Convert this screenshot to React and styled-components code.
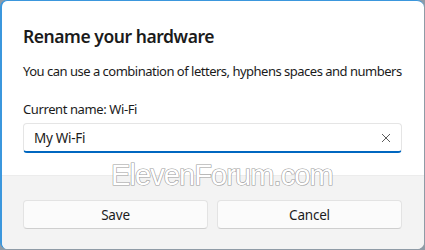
import styled, { createGlobalStyle } from "styled-components";

const GlobalStyle = createGlobalStyle`
  html, body {
    margin: 0;
    padding: 0;
    background: #8f9ba6;
  }
  body {
    font-family: "Segoe UI", "Noto Sans", "Liberation Sans", sans-serif;
    color: #1b1b1b;
  }
`;

const Dialog = styled.div`
  position: relative;
  width: 424px;
  height: 249px;
  box-sizing: border-box;
  background: #ffffff;
  border-top: 1px solid #3b97dd;
  border-left: 2px solid #3b97dd;
  border-radius: 7px;
  overflow: hidden;
  display: flex;
  flex-direction: column;
`;

const Body = styled.div`
  padding: 22px 22px 0 21px;
  height: 174px;
  box-sizing: border-box;
`;

const Title = styled.h1`
  margin: 0;
  font-size: 17.5px;
  font-weight: 600;
  line-height: 26px;
  letter-spacing: -0.45px;
`;

const Hint = styled.p`
  margin: 12px 0 0;
  font-size: 13px;
  line-height: 20px;
  letter-spacing: -0.5px;
  white-space: nowrap;
`;

const Label = styled.div`
  margin-top: 18px;
  font-size: 13px;
  line-height: 20px;
  letter-spacing: -0.4px;
`;

const Field = styled.div`
  margin-top: 4px;
  height: 30px;
  box-sizing: border-box;
  display: flex;
  align-items: center;
  justify-content: space-between;
  padding: 0 10px 0 10px;
  border: 1px solid #e5e5e5;
  border-bottom: 2px solid #0067c0;
  border-radius: 4px;
  background: #ffffff;
  font-size: 13.5px;
  letter-spacing: -0.3px;
`;

const ClearIcon = styled.svg`
  width: 10px;
  height: 10px;
`;

const Footer = styled.div`
  flex: 1;
  background: #f3f3f3;
  border-top: 1px solid #ececec;
  display: grid;
  grid-template-columns: 1fr 1fr;
  gap: 9px;
  padding: 24px 22px 0 21px;
  align-content: start;
`;

const Button = styled.button`
  height: 29px;
  border: 1px solid #e3e3e3;
  border-bottom-color: #cfcfcf;
  border-radius: 4px;
  background: #fbfbfb;
  font-family: inherit;
  font-size: 13.5px;
  letter-spacing: -0.2px;
  color: #1b1b1b;
`;

const Watermark = styled.div`
  position: absolute;
  left: 109px;
  top: 157px;
  font-family: "Liberation Sans", Arial, sans-serif;
  font-size: 29px;
  line-height: 34px;
  letter-spacing: -0.9px;
  white-space: nowrap;
  color: #ffffff;
  -webkit-text-stroke: 1.2px #9a9a9a;
  paint-order: stroke fill;
  pointer-events: none;
`;

export default function App() {
  return (
    <>
      <GlobalStyle />
      <Dialog>
        <Body>
          <Title>Rename your hardware</Title>
          <Hint>You can use a combination of letters, hyphens spaces and numbers</Hint>
          <Label>Current name: Wi-Fi</Label>
          <Field>
            <span>My Wi-Fi</span>
            <ClearIcon viewBox="0 0 10 10">
              <path d="M1 1 L9 9 M9 1 L1 9" stroke="#5c5c5c" strokeWidth="1" fill="none" />
            </ClearIcon>
          </Field>
        </Body>
        <Footer>
          <Button>Save</Button>
          <Button>Cancel</Button>
        </Footer>
        <Watermark>ElevenForum.com</Watermark>
      </Dialog>
    </>
  );
}
